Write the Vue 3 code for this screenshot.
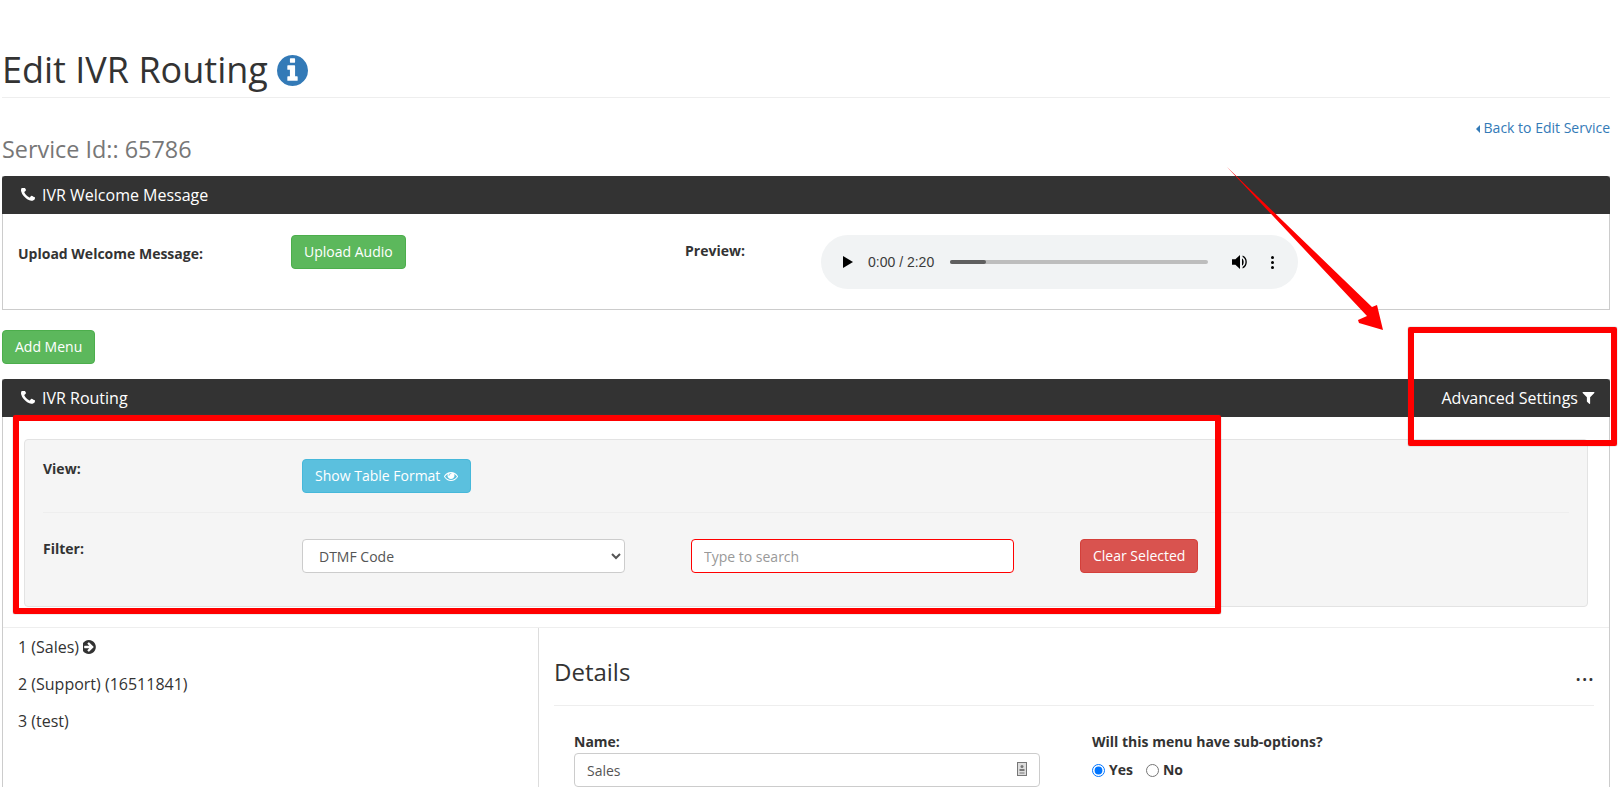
<template>
  <div class="page">
    <h1 class="page-title">
      Edit IVR Routing
      <svg class="info-icon" viewBox="128 128 1536 1536"><path :d="icons.info" /></svg>
    </h1>

    <div class="service-row">
      <h3>Service Id:: 65786</h3>
      <a class="back-link" href="#"><i class="caret-left"></i>Back to Edit Service</a>
    </div>

    <section class="panel welcome">
      <header class="panel-head">
        <span class="panel-title">
          <svg class="phone" viewBox="192 256 1408 1408"><path :d="icons.phone" /></svg>
          IVR Welcome Message
        </span>
      </header>
      <div class="welcome-body">
        <label class="bold upload-label">Upload Welcome Message:</label>
        <div><button class="btn btn-green">Upload Audio</button></div>
        <label class="bold preview-label">Preview:</label>
        <div class="audio">
          <svg class="audio-play" viewBox="0 0 10 12"><path d="M0 0l10 6-10 6z" /></svg>
          <span class="audio-time">0:00 / 2:20</span>
          <div class="audio-track"><div class="audio-progress" :style="{ width: progress + '%' }"></div></div>
          <svg class="audio-volume" viewBox="0 0 16 16">
            <path d="M0 5.2h3.4L8 1v14l-4.6-4.2H0z" />
            <path d="M10 4.4c2.2 1 2.2 6.2 0 7.2z" />
            <path d="M10.6 1.6c5.6 1.6 5.6 11.200 0 12.800v-1.500c3.800-1.500 3.800-8.300 0-9.800z" />
          </svg>
          <span class="audio-dots"><i></i><i></i><i></i></span>
        </div>
      </div>
    </section>

    <button class="btn btn-green add-menu">Add Menu</button>

    <section class="panel routing">
      <header class="panel-head">
        <span class="panel-title">
          <svg class="phone" viewBox="192 256 1408 1408"><path :d="icons.phone" /></svg>
          IVR Routing
        </span>
        <span class="advanced">
          Advanced Settings
          <svg class="filter-icon" viewBox="128 256 1536 1408"><path :d="icons.filter" /></svg>
        </span>
      </header>

      <div class="routing-body">
        <div class="well">
          <div class="well-row view-row">
            <label class="bold">View:</label>
            <button class="btn btn-blue">
              Show Table Format
              <svg class="eye" viewBox="0 320 1792 1152"><path :d="icons.eye" /></svg>
            </button>
          </div>
          <div class="well-row filter-row">
            <label class="bold">Filter:</label>
            <select class="field filter-select">
              <option>DTMF Code</option>
            </select>
            <input class="field search" type="text" placeholder="Type to search" />
            <button class="btn btn-red">Clear Selected</button>
          </div>
        </div>
      </div>

      <div class="split">
        <ul class="menu-list">
          <li v-for="item in menuItems" :key="item.label">
            {{ item.label }}
            <svg v-if="item.active" class="arrow-icon" viewBox="128 128 1536 1536"><path :d="icons.arrow" /></svg>
          </li>
        </ul>
        <div class="details">
          <div class="details-head">
            <h3>Details</h3>
            <span class="more">...</span>
          </div>
          <div class="details-form">
            <div class="name-col">
              <label class="bold name-label">Name:</label>
              <div class="name-input">
                <input class="field" type="text" value="Sales" readonly />
                <svg class="card-icon" viewBox="0 0 10 14">
                  <rect x="0.500" y="0.500" width="9" height="13" fill="#ddd" stroke="#777" />
                  <circle cx="5" cy="4.500" r="1.500" fill="#777" />
                  <rect x="2.500" y="7" width="5" height="2" fill="#777" />
                  <rect x="2.500" y="10" width="5" height="2" fill="#aaa" />
                </svg>
              </div>
            </div>
            <div class="sub-col">
              <label class="bold">Will this menu have sub-options?</label>
              <div class="radios">
                <label class="bold radio"><input type="radio" name="sub" checked />Yes</label>
                <label class="bold radio"><input type="radio" name="sub" />No</label>
              </div>
            </div>
          </div>
        </div>
      </div>
    </section>

    <!-- red marks drawn on top of the screenshot -->
    <div class="mark mark-left"></div>
    <div class="mark mark-right"></div>
    <svg class="mark-arrow" width="1622" height="787">
      <path d="M1227 167L1372 307L1377 305L1383 330L1359 323L1358 320L1367 316Z" fill="#f00" />
    </svg>
  </div>
</template>

<script setup>
const progress = 14

const menuItems = [
  { label: '1 (Sales)', active: true },
  { label: '2 (Support) (16511841)', active: false },
  { label: '3 (test)', active: false }
]

const icons = {
  phone: 'M1600 1240q0 27-10 70.5t-21 68.5q-21 50-122 106-94 51-186 51-27 0-53-3.5t-57.5-12.5-47-14.5-55.5-20.5-49-18q-98-35-175-83-127-79-264-216t-216-264q-48-77-83-175-3-9-18-49t-20.5-55.5-14.5-47-12.5-57.5-3.5-53q0-92 51-186 56-101 106-122 25-11 68.5-21t70.5-10q14 0 21 3 18 6 53 76 11 19 30 54t35 63.5 31 53.5q3 4 17.5 25t21.5 35.5 7 28.5q0 20-28.5 50t-62 55-62 53-28.5 46q0 9 5 22.5t8.5 20.5 14 24 11.5 19q76 137 174 235t235 174q2 1 19 11.5t24 14 20.5 8.5 22.5 5q18 0 46-28.5t53-62 55-62 50-28.5q14 0 28.5 7t35.5 21.5 25 17.5q25 15 53.5 31t63.5 35 54 30q70 35 76 53 3 7 3 21z',
  info: 'M1152 1376v-160q0-14-9-23t-23-9h-96v-512q0-14-9-23t-23-9h-320q-14 0-23 9t-9 23v160q0 14 9 23t23 9h96v320h-96q-14 0-23 9t-9 23v160q0 14 9 23t23 9h448q14 0 23-9t9-23zm-128-896v-160q0-14-9-23t-23-9h-192q-14 0-23 9t-9 23v160q0 14 9 23t23 9h192q14 0 23-9t9-23zm640 416q0 209-103 385.5t-279.5 279.5-385.5 103-385.5-103-279.5-279.5-103-385.5 103-385.5 279.5-279.5 385.5-103 385.5 103 279.5 279.5 103 385.5z',
  filter: 'M1595 295q17 41-14 70l-493 493v742q0 42-39 59-13 5-25 5-27 0-45-19l-256-256q-19-19-19-45v-486l-493-493q-31-29-14-70 17-39 59-39h1280q42 0 59 39z',
  eye: 'M1664 960q-152-236-381-353 61 104 61 225 0 185-131.5 316.5t-316.5 131.5-316.5-131.5-131.5-316.5q0-121 61-225-229 117-381 353 133 205 333.5 326.5t434.5 121.5 434.5-121.5 333.5-326.5zm-720-384q0-20-14-34t-34-14q-125 0-214.5 89.5t-89.5 214.5q0 20 14 34t34 14 34-14 14-34q0-86 61-147t147-61q20 0 34-14t14-34zm848 384q0 34-20 69-140 230-376.5 368.5t-499.5 138.5-499.5-139-376.5-368q-20-35-20-69t20-69q140-229 376.5-368t499.5-139 499.5 139 376.5 368q20 35 20 69z',
  arrow: 'M1285 897q0-27-18-45l-91-91-362-362q-18-18-45-18t-45 18l-91 91q-18 18-18 45t18 45l189 189h-502q-26 0-45 19t-19 45v128q0 26 19 45t45 19h502l-189 189q-19 19-19 45t19 45l91 91q18 18 45 18t45-18l362-362 91-91q18-18 18-45zm251-1q0 209-103 385.500t-279.500 279.500-385.500 103-385.500-103-279.500-279.500-103-385.500 103-385.500 279.500-279.500 385.500-103 385.500 103 279.500 279.500 103 385.500z'
}
</script>

<style>
html,
body {
  margin: 0;
  background: #fff;
}
</style>

<style scoped>
.page {
  position: relative;
  box-sizing: border-box;
  width: 1622px;
  height: 787px;
  overflow: hidden;
  padding: 0 12px 0 2px;
  font-family: "Open Sans", "Liberation Sans", sans-serif;
  font-size: 14px;
  line-height: 20px;
  color: #333;
}

.page-title {
  display: flex;
  align-items: center;
  gap: 9px;
  height: 98px;
  box-sizing: border-box;
  margin: 0;
  padding: 43px 0 0;
  border-bottom: 1px solid #eee;
  font-size: 36px;
  line-height: 40px;
  font-weight: 400;
}

.info-icon {
  width: 31px;
  height: 31px;
  fill: #337ab7;
}

.service-row {
  display: flex;
  justify-content: space-between;
  height: 78px;
}

.service-row h3 {
  margin: 38px 0 0;
  font-size: 23.400px;
  line-height: 26px;
  font-weight: 400;
  color: #777;
}

.back-link {
  margin-top: 20px;
  height: 20px;
  color: #337ab7;
  text-decoration: none;
}

.caret-left {
  display: inline-block;
  margin-right: 4px;
  border: 4px solid transparent;
  border-right: 4px solid #337ab7;
  border-left: 0;
}

.panel {
  border: 1px solid #ccc;
  border-top: 0;
}

.panel-head {
  display: flex;
  justify-content: space-between;
  align-items: center;
  box-sizing: border-box;
  height: 38px;
  margin: 0 -1px;
  padding: 0 15px 0 19px;
  border-radius: 3px 3px 0 0;
  background: #333;
  color: #fff;
  font-size: 16px;
}

.panel-title {
  display: flex;
  align-items: center;
  gap: 7px;
}

.phone {
  width: 14px;
  height: 14px;
  fill: #fff;
}

.advanced {
  display: flex;
  align-items: center;
  gap: 4px;
}

.filter-icon {
  width: 13px;
  height: 12px;
  fill: #fff;
}

.welcome-body {
  display: grid;
  grid-template-columns: 273px 394px 136px 477px;
  align-items: start;
  height: 95px;
  box-sizing: border-box;
  padding: 21px 0 0 15px;
}

.bold {
  font-weight: 700;
}

.upload-label {
  margin-top: 9px;
}

.preview-label {
  margin-top: 6px;
}

.btn {
  display: inline-flex;
  align-items: center;
  box-sizing: border-box;
  height: 34px;
  padding: 0 12px;
  border: 1px solid transparent;
  border-radius: 4px;
  color: #fff;
  font: inherit;
  cursor: pointer;
}

.btn-green {
  background: #5cb85c;
  border-color: #4cae4c;
}

.btn-blue {
  background: #5bc0de;
  border-color: #46b8da;
}

.btn-red {
  background: #d9534f;
  border-color: #d43f3a;
}

.audio {
  display: flex;
  align-items: center;
  height: 54px;
  border-radius: 27px;
  background: #f1f3f4;
  color: #3b3b3b;
}

.audio-play {
  width: 10px;
  height: 12px;
  margin-left: 22px;
  fill: #000;
}

.audio-time {
  margin-left: 15px;
  font-family: "Liberation Sans", Arial, sans-serif;
  font-size: 14px;
}

.audio-track {
  width: 258px;
  height: 4px;
  margin-left: 16px;
  border-radius: 2px;
  background: #bdbdbd;
}

.audio-progress {
  height: 100%;
  border-radius: 2px;
  background: #5f5f5f;
}

.audio-volume {
  width: 16px;
  height: 16px;
  margin-left: 24px;
  fill: #000;
}

.audio-dots {
  display: flex;
  flex-direction: column;
  gap: 2px;
  margin-left: 23px;
}

.audio-dots i {
  width: 3px;
  height: 3px;
  border-radius: 50%;
  background: #000;
}

.add-menu {
  display: flex;
  margin: 20px 0 15px;
}

.routing-body {
  padding: 22px 21px 20px;
  border-bottom: 1px solid #eee;
}

.well {
  height: 168px;
  box-sizing: border-box;
  padding: 0 18px;
  border: 1px solid #e3e3e3;
  border-radius: 4px;
  background: #f5f5f5;
}

.well-row {
  display: flex;
  align-items: flex-start;
}

.well-row > label {
  width: 259px;
}

.view-row {
  height: 73px;
  padding-top: 19px;
  box-sizing: border-box;
  border-bottom: 1px solid #eee;
}

.filter-row {
  padding-top: 26px;
}

.eye {
  width: 14px;
  height: 10px;
  margin-left: 4px;
  fill: #fff;
}

.field {
  box-sizing: border-box;
  height: 34px;
  padding: 0 12px;
  border: 1px solid #ccc;
  border-radius: 4px;
  background: #fff;
  color: #555;
  font: inherit;
}

.filter-select {
  width: 323px;
}

.search {
  width: 323px;
  margin-left: 66px;
  border-color: #f00;
  outline: 0;
}

.search::placeholder {
  color: #999;
}

.btn-red {
  margin-left: 66px;
}

.split {
  display: flex;
  height: 200px;
}

.menu-list {
  width: 536px;
  box-sizing: border-box;
  margin: 0;
  padding: 0;
  list-style: none;
  border-right: 1px solid #ddd;
  font-size: 16px;
}

.menu-list li {
  display: flex;
  align-items: center;
  gap: 4px;
  height: 37px;
  padding-left: 15px;
  box-sizing: border-box;
}

.arrow-icon {
  width: 14px;
  height: 14px;
  fill: #333;
}

.details {
  flex: 1;
  padding: 0 15px;
}

.details-head {
  display: flex;
  justify-content: space-between;
  height: 78px;
  box-sizing: border-box;
  border-bottom: 1px solid #eee;
}

.details-head h3 {
  margin: 29px 0 0;
  font-size: 24px;
  line-height: 30px;
  font-weight: 400;
}

.more {
  margin: 29px 0 0;
  font-size: 24px;
  line-height: 30px;
}

.details-form {
  display: flex;
  padding: 26px 20px 0;
}

.name-col {
  display: flex;
  flex-direction: column;
  width: 466px;
}

.name-label {
  margin-bottom: 1px;
}

.name-input {
  position: relative;
}

.name-input .field {
  display: block;
  width: 100%;
}

.card-icon {
  position: absolute;
  top: 9px;
  right: 13px;
  width: 10px;
  height: 14px;
}

.sub-col {
  display: flex;
  flex-direction: column;
  margin-left: 52px;
}

.radios {
  display: flex;
  gap: 13px;
  margin-top: 8px;
}

.radio {
  display: flex;
  align-items: center;
  gap: 4px;
}

.radio input {
  width: 13px;
  height: 13px;
  margin: 0;
}

.mark {
  position: absolute;
  box-sizing: border-box;
  border: 6px solid #f00;
  border-radius: 2px;
  box-shadow: 0 0 1px #555;
}

.mark-left {
  left: 13px;
  top: 415px;
  width: 1208px;
  height: 199px;
}

.mark-right {
  left: 1408px;
  top: 327px;
  width: 209px;
  height: 119px;
}

.mark-arrow {
  position: absolute;
  left: 0;
  top: 0;
  pointer-events: none;
}
</style>
